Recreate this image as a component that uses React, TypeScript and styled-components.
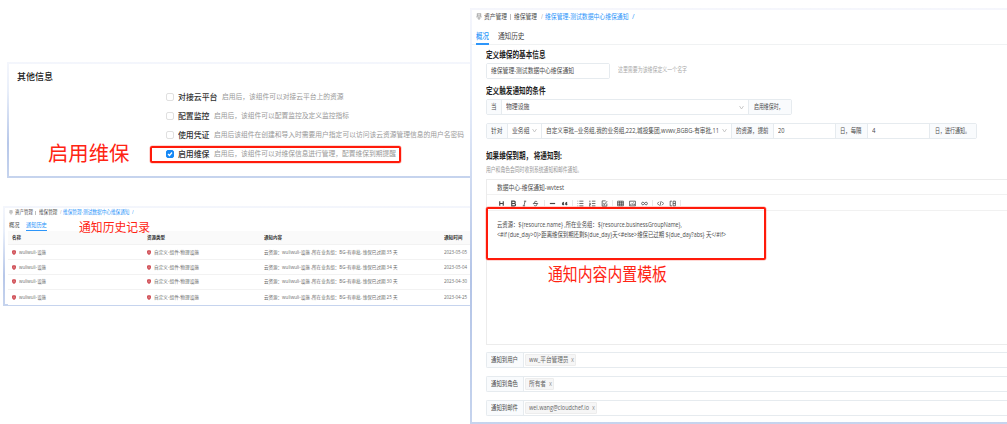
import React, { useLayoutEffect, useRef, useState } from 'react';
import styled, { createGlobalStyle } from 'styled-components';

const GlobalStyle = createGlobalStyle`
  * { box-sizing: border-box; }
  body {
    margin: 0;
    background: #fff;
    font-family: "Open Sans", "Noto Sans CJK SC", sans-serif;
    overflow: hidden;
  }
`;

/* ---------- text that fills a given measure ---------- */

const TextBox = styled.span<{ $w: number; $size: number; $color: string; $weight: number; $gap?: number }>`
  display: block;
  flex: none;
  width: ${p => p.$w}px;
  margin-left: ${p => p.$gap ?? 0}px;
  font-size: ${p => p.$size}px;
  font-weight: ${p => p.$weight};
  color: ${p => p.$color};
  line-height: 1.4;
  white-space: pre;
`;
const TextRun = styled.span`
  display: inline-block;
  transform-origin: 0 50%;
`;

type TProps = { w: number; size?: number; color?: string; bold?: boolean; weight?: number; gap?: number; children: string };

function T({ w, size = 7, color = '#4c4c4c', bold, weight, gap, children }: TProps) {
  const ref = useRef<HTMLSpanElement>(null);
  const [scale, setScale] = useState(1);
  useLayoutEffect(() => {
    const el = ref.current;
    if (!el) return;
    const prev = el.style.transform;
    el.style.transform = 'none';
    const natural = el.getBoundingClientRect().width;
    el.style.transform = prev;
    if (natural > 0) setScale(w / natural);
  }, [w, size, children]);
  return (
    <TextBox $w={w} $size={size} $color={color} $weight={weight ?? (bold ? 700 : 400)} $gap={gap}>
      <TextRun ref={ref} style={{ transform: `scaleX(${scale})` }}>{children}</TextRun>
    </TextBox>
  );
}

/* ---------- page frame ---------- */

const Page = styled.main`
  display: flex;
  width: 1007px;
  height: 424px;
  overflow: hidden;
`;
const LeftColumn = styled.div`
  display: flex;
  flex-direction: column;
  width: 470px;
  padding-top: 62px;
  flex: none;
`;
const Panel = styled.section<{ $h: number; $left: number; $top?: number }>`
  position: relative;
  height: ${p => p.$h}px;
  margin-left: ${p => p.$left}px;
  margin-top: ${p => p.$top ?? 0}px;
  border: 2px solid;
  border-right: 0;
  border-image: linear-gradient(to bottom, #f4f6fc 0%, #e9effa 25%, #b7c7e9 70%, #c6d4ee 100%) 2;
`;
const RightPanel = styled.section`
  position: relative;
  flex: 1;
  min-width: 0;
  height: 416px;
  margin-top: 8px;
  border: 2px solid;
  border-right: 0;
  border-image: linear-gradient(to bottom, #f5f6fc 0%, #e8eefa 20%, #b3c4e7 65%, #c6d4ee 100%) 2;
`;
const Row = styled.div<{ $h: number; $left?: number; $mt?: number; $drop?: number }>`
  display: flex;
  align-items: center;
  height: ${p => p.$h}px;
  padding-left: ${p => p.$left ?? 0}px;
  padding-top: ${p => p.$drop ?? 0}px;
  margin-top: ${p => p.$mt ?? 0}px;
`;

/* ---------- red annotations ---------- */

const Callout = styled.div<{ $x: number; $y: number }>`
  position: absolute;
  left: ${p => p.$x}px;
  top: ${p => p.$y}px;
`;
const RedFrame = styled.div<{ $x: number; $y: number; $w: number; $h: number }>`
  position: absolute;
  left: ${p => p.$x}px;
  top: ${p => p.$y}px;
  width: ${p => p.$w}px;
  height: ${p => p.$h}px;
  border: 2px solid #ff1a0a;
  border-radius: 2px;
  box-shadow: 0 0 0 0.5px rgba(255, 26, 10, 0.35);
`;
const RED = '#ff2413';
const BLUE = '#2d96fa';

/* ---------- options ---------- */

const Box = styled.span<{ $on?: boolean }>`
  display: flex;
  align-items: center;
  justify-content: center;
  width: 8px;
  height: 8px;
  border: 1px solid ${p => (p.$on ? '#1688f5' : '#e0e0e0')};
  border-radius: 2px;
  background: ${p => (p.$on ? '#1688f5' : '#fff')};
  flex: none;
`;

const options = [
  { label: '对接云平台', lw: 39.5, text: '启用后，该组件可以对接云平台上的资源', w: 121.5 },
  { label: '配置监控', lw: 31.5, text: '启用后，该组件可以配置监控及定义监控指标', w: 135 },
  { label: '使用凭证', lw: 31.5, text: '启用后该组件在创建和导入时需要用户指定可以访问该云资源管理信息的用户名密码', w: 250 },
  { label: '启用维保', lw: 31.5, text: '启用后，该组件可以对维保信息进行管理，配置维保到期提醒', w: 182, on: true },
];

function OtherInfo() {
  return (
    <Panel $h={116} $left={7}>
      <Row $h={23.5} $left={8} $drop={2}>
        <T w={36} size={9.3} color="#222" weight={500}>其他信息</T>
      </Row>
      {options.map(o => (
        <Row key={o.label} $h={19} $left={157}>
          <Box $on={o.on}>
            {o.on && (
              <svg width="6" height="6" viewBox="0 0 6 6" fill="none" stroke="#fff" strokeWidth="1.2">
                <path d="M1 3l1.5 1.5L5 1.5" />
              </svg>
            )}
          </Box>
          <T w={o.lw} size={8} color="#333" weight={500} gap={4}>{o.label}</T>
          <T w={o.w} size={6.9} color="#999" gap={4.5}>{o.text}</T>
        </Row>
      ))}
      <RedFrame $x={141} $y={82} $w={251} $h={17} />
      <Callout $x={38.5} $y={75}>
        <T w={81.5} size={20.5} color={RED}>启用维保</T>
      </Callout>
    </Panel>
  );
}

/* ---------- breadcrumb and tabs ---------- */

function AssetIcon({ size }: { size: number }) {
  return (
    <svg width={size} height={size * 1.15} viewBox="0 0 12 14" fill="none" stroke="#888" strokeWidth="1.3">
      <path d="M2.5 1v6.5M9.5 1v6.5M2.5 1.5h7M2.5 4.5h7M0.5 8h11M6 8v5M3.5 10.5L6 13l2.5-2.5" />
    </svg>
  );
}

const CrumbBar = styled.span<{ $h: number; $before: number; $after: number }>`
  width: 1px;
  height: ${p => p.$h}px;
  margin: 0 ${p => p.$after}px 0 ${p => p.$before}px;
  background: #bdbdbd;
  flex: none;
`;
const TabLine = styled.span<{ $w: number; $h: number; $x: number }>`
  position: absolute;
  left: ${p => p.$x}px;
  bottom: 0;
  width: ${p => p.$w}px;
  height: ${p => p.$h}px;
  background: ${BLUE};
`;
const HistoryTabs = styled.div`
  position: relative;
  display: flex;
  align-items: center;
  height: 14px;
  padding: 2px 0 0 4px;
`;

/* ---------- history table ---------- */

const TableRow = styled.div<{ $head?: boolean }>`
  display: grid;
  grid-template-columns: 135px 117px 180px 1fr;
  align-items: center;
  height: ${p => (p.$head ? 14 : 14.8)}px;
  margin-left: 3px;
  padding-left: 4px;
  background: ${p => (p.$head ? '#fafafa' : '#fff')};
  border-bottom: 1px solid #f2f2f2;
  &:last-child { border-bottom: 0; }
`;
const Cell = styled.div`
  display: flex;
  align-items: center;
`;
function Shield() {
  return (
    <svg width="4" height="5" viewBox="0 0 8 10">
      <path d="M0 1.5L4 0l4 1.5V5c0 2.5-2 4-4 5C2 9 0 7.5 0 5z" fill="#d2555c" />
      <path d="M2.5 3.5h3v2.2h-3z" fill="#e08a90" />
    </svg>
  );
}

const history = [
  ['35', '2023-05-05'],
  ['34', '2023-05-04'],
  ['30', '2023-04-30'],
  ['25', '2023-04-25'],
];
const TableBody = styled.div`
  padding-top: 0.5px;
`;

function History() {
  return (
    <Panel $h={100} $left={3} $top={28}>
      <Row $h={9} $left={4}>
        <AssetIcon size={4} />
        <T w={18} size={5.2} gap={1.5}>资产管理</T>
        <CrumbBar $h={4} $before={2.5} $after={2.5} />
        <T w={18.5} size={5.2}>维保管理</T>
        <T w={1.6} size={5} color="#aaa" gap={3}>/</T>
        <T w={66.5} size={5.2} color={BLUE} gap={1.5}>维保管理-测试数据中心维保通知</T>
        <T w={1.6} size={5} color={BLUE} gap={2}>/</T>
      </Row>
      <HistoryTabs>
        <T w={10.5} size={5.8}>概况</T>
        <T w={20.8} size={5.8} color={BLUE} gap={6.3}>通知历史</T>
        <TabLine $x={20.5} $w={21.5} $h={1} />
      </HistoryTabs>
      <TableRow $head>
        <T w={9} size={5.1} color="#333" bold>名称</T>
        <T w={18} size={5.1} color="#333" bold>资源类型</T>
        <T w={18} size={5.1} color="#333" bold>通知内容</T>
        <T w={18.5} size={5.1} color="#333" bold>通知时间</T>
      </TableRow>
      <TableBody>
        {history.map(([days, date]) => (
          <TableRow key={date}>
            <Cell><Shield /><T w={27} size={5.1} color="#6c6c6c" gap={2.5}>wuliwuli-设施</T></Cell>
            <Cell><Shield /><T w={45} size={5.1} color="#6c6c6c" gap={2.5}>自定义-组件-物理设施</T></Cell>
            <T w={133.5} size={5.1} color="#6c6c6c">{`云资源：wuliwuli-设施 ,所在业务组：BG-有审批, 维保已过期 ${days} 天`}</T>
            <T w={23} size={5.1} color="#6c6c6c">{date}</T>
          </TableRow>
        ))}
      </TableBody>
      <Callout $x={74} $y={10.5}>
        <T w={71} size={12.3} color={RED}>通知历史记录</T>
      </Callout>
    </Panel>
  );
}

/* ---------- form ---------- */

const DetailTabs = styled.div`
  position: relative;
  display: flex;
  align-items: center;
  height: 22px;
  padding: 3px 0 0 4px;
  background: linear-gradient(#f0f2f3, #f0f2f3) 0 100% / 100% 1px no-repeat;
`;
const Form = styled.div`
  padding-left: 14px;
`;
const Group = styled.div<{ $w?: number; $mt?: number; $open?: boolean }>`
  display: flex;
  width: ${p => (p.$w ? `${p.$w}px` : 'auto')};
  height: 16px;
  margin-top: ${p => p.$mt ?? 0}px;
  border: 1px solid #e6ebef;
  border-right-width: ${p => (p.$open ? 0 : 1)}px;
  border-radius: ${p => (p.$open ? '2px 0 0 2px' : '2px')};
  flex: none;
`;
const Segment = styled.div<{ $w?: number; $addon?: boolean; $pad?: number }>`
  display: flex;
  align-items: center;
  flex: ${p => (p.$w ? 'none' : 1)};
  width: ${p => (p.$w ? `${p.$w}px` : 'auto')};
  padding-left: ${p => p.$pad ?? 4}px;
  background: ${p => (p.$addon ? '#f9fbfd' : '#fff')};
  border-right: 1px solid #e6ebef;
  &:last-child { border-right: 0; }
`;
const ChevronBox = styled.span`
  display: flex;
  margin-left: auto;
  padding-right: 4px;
`;
const Chevron = () => (
  <ChevronBox>
    <svg width="5" height="5" viewBox="0 0 5 5" fill="none" stroke="#b5b5b5" strokeWidth="0.7">
      <path d="M0.5 1l2 3 2-3" />
    </svg>
  </ChevronBox>
);

/* ---------- editor ---------- */

const Editor = styled.div`
  height: 166px;
  margin-top: 4px;
  border: 1px solid #ececec;
  border-right: 0;
`;
const EditorTitle = styled.div`
  display: flex;
  align-items: center;
  height: 15px;
  padding: 1px 0 0 10px;
  border-bottom: 1px solid #f1f1f1;
`;
const Toolbar = styled.div`
  display: flex;
  align-items: center;
  height: 16px;
  padding: 1px 0 0 9px;
  border-bottom: 1px solid #f1f1f1;
`;
const Tool = styled.span<{ $w: number }>`
  display: flex;
  justify-content: center;
  width: ${p => p.$w}px;
  flex: none;
`;
const Separator = styled.span`
  width: 1px;
  height: 6px;
  margin: 0 2px;
  background: #e8e8e8;
`;
const EditorBody = styled.div`
  padding: 8.5px 0 0 10px;
`;

const tools: (string | null)[] = [
  'M3 2v8M9 2v8M3 6h6',
  'M3 2h4a2 2 0 0 1 0 4H3zM3 6h4.5a2 2 0 0 1 0 4H3z',
  'M5 2h4M3 10h4M7 2L5 10',
  'M9 3.5C8 1.5 3.5 2 4 4.5c.5 1.5 4.5 1 4.5 3.5 0 2.5-4.5 2.5-5.5.5M1.5 6h9',
  null,
  'M1.5 6h9',
  'M5 4c-3 0-3 4-1.5 4S5 6 3 6M10.5 4c-3 0-3 4-1.5 4S10.5 6 8.5 6',
  null,
  'M1 2h1M4 2h7M1 6h1M4 6h7M1 10h1M4 10h7',
  'M1.5 1v3M.5 6h2v2h-2v2.5h2M5 2h6M5 6h6M5 10h6',
  'M10 6v4.5H2v-9h6M4 5l2 2.5L10.5 2M4 8.5h3',
  null,
  'M1 2h10v8H1zM1 4.7h10M1 7.3h10M4.5 2v8M8 2v8',
  'M1 2h10v8H1zM2 9l3-3 2 2 1.5-1.5L10 9M7.5 4.5h1',
  'M6 6c-1-3-5-3-5 0s4 3 5 0c1-3 5-3 5 0s-4 3-5 0',
  null,
  'M3.5 3L.5 6l3 3M8.5 3l3 3-3 3M7 2L5 10',
  'M5 2H2v8h3M7 2h4v8H7zM7 6h4',
  null,
];
const heavy = new Set([0, 1, 5, 6]);

/* ---------- recipients ---------- */

const Tag = styled.span<{ $w: number }>`
  display: flex;
  align-items: center;
  width: ${p => p.$w}px;
  height: 12px;
  padding-left: 3px;
  border: 1px solid #ededed;
  border-radius: 1px;
  background: #f6f6f6;
`;
const recipients = [
  { label: '通知到用户', value: 'ww_平台管理员', w: 39.5, tag: 51 },
  { label: '通知到角色', value: '所有者', w: 17, tag: 29 },
  { label: '通知到邮件', value: 'wei.wang@cloudchef.io', w: 60, tag: 72 },
];

function Detail() {
  return (
    <RightPanel>
      <Row $h={13} $left={4}>
        <AssetIcon size={6} />
        <T w={23} gap={1.5}>资产管理</T>
        <CrumbBar $h={6} $before={3.5} $after={3} />
        <T w={23}>维保管理</T>
        <T w={2} color="#aaa" gap={3.5}>/</T>
        <T w={83.5} color={BLUE} gap={2.5}>维保管理-测试数据中心维保通知</T>
        <T w={2.5} color={BLUE} gap={3}>/</T>
      </Row>
      <DetailTabs>
        <T w={13} size={8} color={BLUE} weight={500}>概况</T>
        <T w={26.5} size={8} color="#444" gap={8.5}>通知历史</T>
        <TabLine $x={4} $w={13} $h={2} />
      </DetailTabs>
      <Form>
        <Row $h={17.5} $drop={2}><T w={59.5} size={8.6} color="#222" bold>定义维保的基本信息</T></Row>
        <Row $h={16}>
          <Group $w={124}><Segment><T w={83}>维保管理-测试数据中心维保通知</T></Segment></Group>
          <T w={69} size={6.3} color="#aaa" gap={8}>这里需要为该维保定义一个名字</T>
        </Row>
        <Row $h={20.5} $drop={4}><T w={59.5} size={8.6} color="#222" bold>定义触发通知的条件</T></Row>
        <Group $w={306}>
          <Segment $w={15} $addon><T w={5.5}>当</T></Segment>
          <Segment $w={247}><T w={23.5}>物理设施</T><Chevron /></Segment>
          <Segment $addon $pad={5}><T w={29.5}>启用维保时，</T></Segment>
        </Group>
        <Group $w={491} $mt={7.5}>
          <Segment $w={21} $addon><T w={11.5}>针对</T></Segment>
          <Segment $w={34}><T w={17.5}>业务组</T><Chevron /></Segment>
          <Segment $w={190} $pad={4}><T w={173}>自定义审批--业务组,我的业务组,222,城投集团,wvwv,BGBG-有审批,11</T><Chevron /></Segment>
          <Segment $w={42} $addon><T w={32.5}>的资源，提前</T></Segment>
          <Segment $w={62}><T w={6.5}>20</T></Segment>
          <Segment $w={32} $addon><T w={21.5}>日，每隔</T></Segment>
          <Segment $w={62}><T w={3.5}>4</T></Segment>
          <Segment $addon $pad={5}><T w={35}>日，进行通知。</T></Segment>
        </Group>
        <Row $h={16} $mt={8.5} $drop={2}><T w={76} size={8.6} color="#222" bold>如果维保到期， 将通知到:</T></Row>
        <Row $h={12} $drop={2}><T w={96} size={6.3} color="#999">用户和角色会同时收到系统通知和邮件通知。</T></Row>
        <Editor>
          <EditorTitle><T w={67}>数据中心-维保通知-wvtest</T></EditorTitle>
          <Toolbar>
            {tools.map((d, i) =>
              d === null ? (
                <Separator key={i} />
              ) : (
                <Tool key={i} $w={i < 4 ? 11.4 : 11.7}>
                  <svg width="7" height="7" viewBox="0 0 12 12" fill="none" stroke="#444" strokeWidth={heavy.has(i) ? 2 : 1.3}>
                    <path d={d} />
                  </svg>
                </Tool>
              ),
            )}
          </Toolbar>
          <EditorBody>
            <Row $h={10.5}><T w={185}>{'云资源：${resource.name} ,所在业务组：${resource.businessGroupName},'}</T></Row>
            <Row $h={10.5}><T w={229}>{'<#if (due_day>0)>距离维保到期还剩${due_day}天<#else>维保已过期 ${due_day?abs} 天</#if>'}</T></Row>
          </EditorBody>
        </Editor>
        {recipients.map((r, i) => (
          <Group key={r.label} $mt={i ? 8 : 7} $open>
            <Segment $w={37} $addon><T w={27}>{r.label}</T></Segment>
            <Segment $pad={1}>
              <Tag $w={r.tag}>
                <T w={r.w} color="#666">{r.value}</T>
                <T w={3} size={6.5} color="#999" gap={2.5}>x</T>
              </Tag>
            </Segment>
          </Group>
        ))}
      </Form>
      <RedFrame $x={14} $y={197} $w={280} $h={53} />
      <Callout $x={76} $y={252}>
        <T w={119} size={18} color={RED}>通知内容内置模板</T>
      </Callout>
    </RightPanel>
  );
}

export default function App() {
  return (
    <>
      <GlobalStyle />
      <Page>
        <LeftColumn>
          <OtherInfo />
          <History />
        </LeftColumn>
        <Detail />
      </Page>
    </>
  );
}
